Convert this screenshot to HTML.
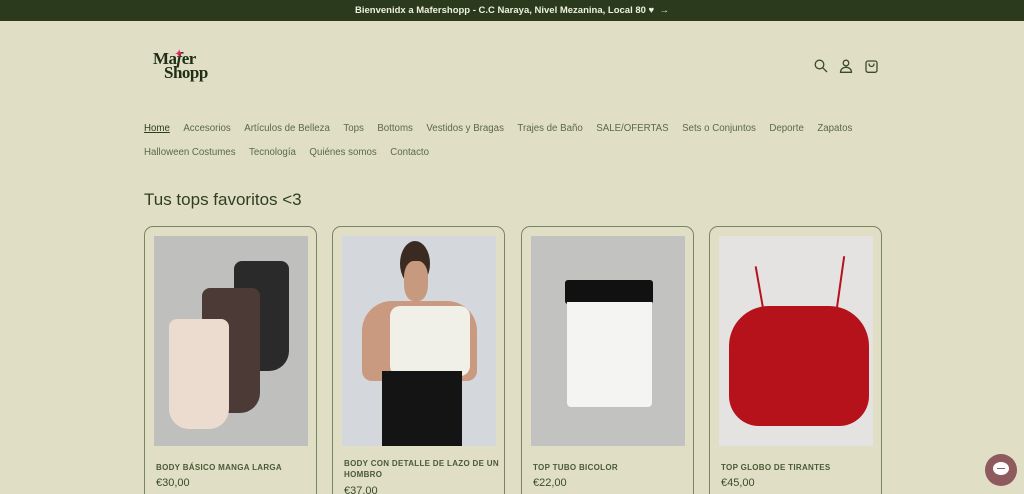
<!DOCTYPE html>
<html><head><meta charset="utf-8"><style>
*{margin:0;padding:0;box-sizing:border-box}
html,body{width:1024px;height:494px;overflow:hidden}
body{background:#e0dfc5;font-family:"Liberation Sans",sans-serif;color:#3a4a2a;position:relative}
.bar{height:21px;background:#2b3a1c;color:#eef0e0;font-size:9.5px;font-weight:bold;text-align:center;line-height:21px}
.logo{position:absolute;left:153px;top:52px;font-family:"Liberation Serif",serif;font-weight:bold;color:#1f2e14;font-size:17px;line-height:14px;letter-spacing:-.5px}
.nav{position:absolute;left:144px;font-size:9.7px;color:#5a6a48}
.nav span{margin-right:13.5px}
h2{position:absolute;left:144px;top:190px;font-size:17px;font-weight:normal;color:#2f3e22}
.card{position:absolute;top:226px;width:173px;height:280px;border:1px solid #7b8566;border-radius:9px}
.img{position:absolute;left:9px;top:9px;width:154px;height:210px;background:#bfbfbd;overflow:hidden}
.t{position:absolute;left:11px;top:235px;font-size:8px;font-weight:bold;color:#4a5a36;letter-spacing:.3px;line-height:11px;width:155px}
.p{position:absolute;left:11px;top:250px;font-size:11px;color:#3a4a2a}
.ic{position:absolute;top:59px}
</style></head><body>
<div class="bar">Bienvenidx a Mafershopp - C.C Naraya, Nivel Mezanina, Local 80 ♥ &nbsp;→</div>
<div class="logo"><span style="position:absolute;left:22px;top:-4px;color:#e0245e;font-size:10px">✦</span>Ma<span style="font-style:italic">f</span>er<br><span style="margin-left:11px">Shopp</span></div>
<svg class="ic" style="left:814px" width="14" height="14" viewBox="0 0 14 14" fill="none" stroke="#3a4a2a" stroke-width="1.3"><circle cx="5.5" cy="5.5" r="4.3"/><path d="M8.7 8.7L13 13"/></svg>
<svg class="ic" style="left:839px" width="14" height="14" viewBox="0 0 14 14" fill="none" stroke="#3a4a2a" stroke-width="1.3"><circle cx="7" cy="4" r="2.8"/><path d="M1.5 13.3h11c0-3-2.5-5-5.5-5s-5.5 2-5.5 5z"/></svg>
<svg class="ic" style="left:865px" width="13" height="14" viewBox="0 0 13 14" fill="none" stroke="#3a4a2a" stroke-width="1.3"><rect x="1" y="2" width="11" height="11.3" rx="2"/><path d="M4 4.5c0 2 1 3 2.5 3s2.5-1 2.5-3"/></svg>
<div class="nav" style="top:123px"><span style="color:#2f3e22;text-decoration:underline">Home</span><span>Accesorios</span><span>Artículos de Belleza</span><span>Tops</span><span>Bottoms</span><span>Vestidos y Bragas</span><span>Trajes de Baño</span><span>SALE/OFERTAS</span><span>Sets o Conjuntos</span><span>Deporte</span><span>Zapatos</span></div>
<div class="nav" style="top:147px"><span>Halloween Costumes</span><span>Tecnología</span><span>Quiénes somos</span><span>Contacto</span></div>
<h2>Tus tops favoritos &lt;3</h2>

<div class="card" style="left:144px"><div class="img">
<div style="position:absolute;left:80px;top:25px;width:55px;height:110px;background:#2a2a2a;border-radius:8px 8px 20px 20px"></div>
<div style="position:absolute;left:48px;top:52px;width:58px;height:125px;background:#4b3a35;border-radius:8px 8px 20px 20px"></div>
<div style="position:absolute;left:15px;top:83px;width:60px;height:110px;background:#ecdcd0;border-radius:8px 8px 20px 20px"></div>
</div><div class="t">BODY BÁSICO MANGA LARGA</div><div class="p">€30,00</div></div>

<div class="card" style="left:332px"><div class="img" style="background:#d4d8dc">
<div style="position:absolute;left:58px;top:5px;width:30px;height:45px;background:#3a2a22;border-radius:50%"></div>
<div style="position:absolute;left:62px;top:25px;width:24px;height:40px;background:#c79a80;border-radius:40%"></div>
<div style="position:absolute;left:20px;top:65px;width:115px;height:80px;background:#c99a80;border-radius:30px 30px 10px 10px"></div>
<div style="position:absolute;left:48px;top:70px;width:80px;height:70px;background:#f0efe8;border-radius:10px"></div>
<div style="position:absolute;left:40px;top:135px;width:80px;height:80px;background:#141414"></div>
</div><div class="t" style="top:231px">BODY CON DETALLE DE LAZO DE UN HOMBRO</div><div class="p" style="top:258px">€37,00</div></div>

<div class="card" style="left:521px"><div class="img" style="background:#c2c2c0">
<div style="position:absolute;left:34px;top:44px;width:88px;height:24px;background:#111;border-radius:3px"></div>
<div style="position:absolute;left:36px;top:66px;width:85px;height:105px;background:#f4f4f2;border-radius:0 0 4px 4px"></div>
</div><div class="t">TOP TUBO BICOLOR</div><div class="p">€22,00</div></div>

<div class="card" style="left:709px"><div class="img" style="background:#e4e3e2">
<div style="position:absolute;left:10px;top:70px;width:140px;height:120px;background:#b5121b;border-radius:40px 40px 30px 30px"></div>
<div style="position:absolute;left:40px;top:30px;width:2px;height:50px;background:#b5121b;transform:rotate(-10deg)"></div>
<div style="position:absolute;left:120px;top:20px;width:2px;height:60px;background:#b5121b;transform:rotate(8deg)"></div>
</div><div class="t">TOP GLOBO DE TIRANTES</div><div class="p">€45,00</div></div>

<div style="position:absolute;left:985px;top:454px;width:32px;height:32px;border-radius:50%;background:#8e5a5e"></div>
<div style="position:absolute;left:993px;top:462px;width:16px;height:13px;border-radius:50%;background:#fff"></div>
<div style="position:absolute;left:997px;top:468px;width:8px;height:1px;background:#8e5a5e"></div>
</body></html>
